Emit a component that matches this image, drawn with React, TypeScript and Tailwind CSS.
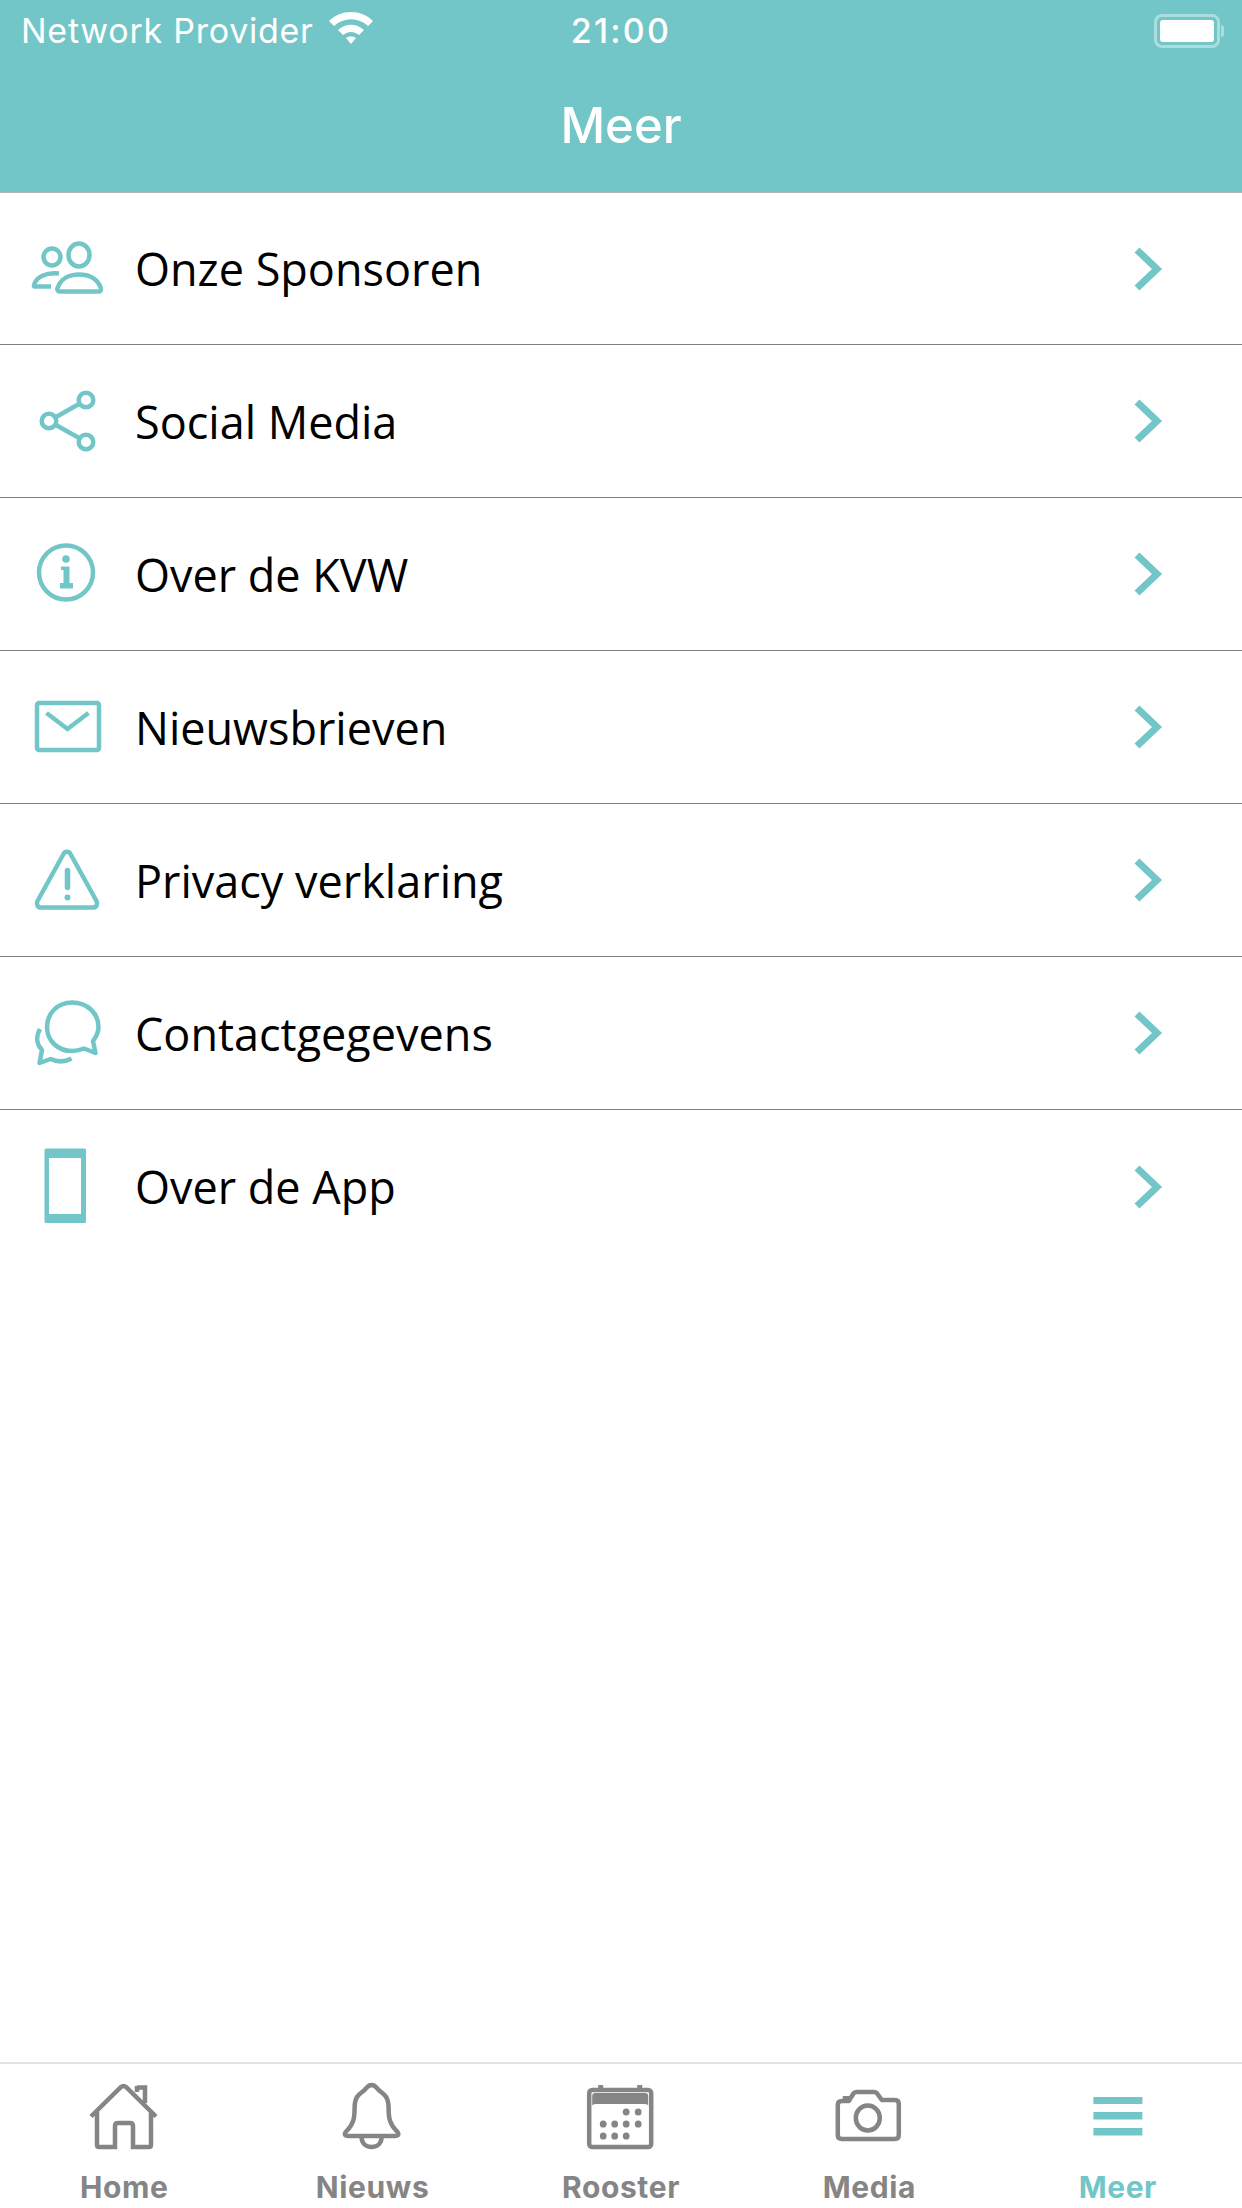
import type { ReactNode } from 'react';

const TEAL = '#72c6c8';
const GRAY = '#858585';

// icon drawings use page coordinates, each svg's viewBox starts at the row top
const rows: { label: string; top: number; icon: ReactNode }[] = [
  {
    label: 'Onze Sponsoren',
    top: 193,
    icon: (
      <g fill="none" stroke={TEAL} strokeWidth="4.500" strokeLinecap="round" strokeLinejoin="round">
        <ellipse cx="79" cy="255" rx="10.500" ry="11.500" />
        <circle cx="52" cy="257" r="8.500" />
        <path d="M59 273.500 C46 272 36 277 34 285 C33.500 286.500 34 286.500 36 286.500 H51" strokeLinecap="butt" />
        <path d="M59 291.500 C57 291 57 288.500 58 287 C61 279 69 274.500 79 274.500 C89 274.500 97 279 100.500 287 C101.500 289.500 101 291.500 98 291.500 Z" />
      </g>
    ),
  },
  {
    label: 'Social Media',
    top: 345,
    icon: (
      <g fill="none" stroke={TEAL} strokeWidth="4.500">
        <circle cx="86" cy="400" r="7.300" />
        <circle cx="49" cy="421" r="7.300" />
        <circle cx="86" cy="442" r="7.300" />
        <path d="M79 404 L56 417 M56 425 L79 438" />
      </g>
    ),
  },
  {
    label: 'Over de KVW',
    top: 498,
    icon: (
      <g>
        <circle cx="66" cy="572.500" r="27" fill="none" stroke={TEAL} strokeWidth="4.500" />
        <circle cx="66" cy="559" r="3.800" fill={TEAL} />
        <path d="M61 566.500 H69.500 V583 H73 V588.500 H60 V583 H63.500 V570 H61 Z" fill={TEAL} />
      </g>
    ),
  },
  {
    label: 'Nieuwsbrieven',
    top: 651,
    icon: (
      <g fill="none" stroke={TEAL} strokeWidth="4.500">
        <rect x="37" y="703" width="62" height="47" rx="2" />
        <path d="M46.500 713 L67.500 729 L88.500 713" />
      </g>
    ),
  },
  {
    label: 'Privacy verklaring',
    top: 804,
    icon: (
      <g>
        <path
          d="M63.500 854 C65 851 69 851 70.500 854 L96.500 901 C98 904 96.500 907.500 93 907.500 H41 C37.500 907.500 36 904 37.500 901 Z"
          fill="none"
          stroke={TEAL}
          strokeWidth="4.500"
          strokeLinejoin="round"
        />
        <path d="M67.500 870.500 V887.500" stroke={TEAL} strokeWidth="5.500" strokeLinecap="round" />
        <circle cx="67.500" cy="897.500" r="3" fill={TEAL} />
      </g>
    ),
  },
  {
    label: 'Contactgegevens',
    top: 957,
    icon: (
      <g fill="none" stroke={TEAL} strokeWidth="4.500" strokeLinejoin="round">
        <path d="M72 1002.500 C58 1002.500 47 1013 47 1027 C47 1041 58 1051 72 1051 C76 1051 80 1050 84 1048.500 L95.500 1053 L93 1041 C96 1037 98.500 1032 98.500 1027 C98.500 1013 87 1002.500 72 1002.500 Z" />
        <path d="M40 1029 C36 1036 36 1044 42 1050 L39.500 1063 L50.500 1059 C57 1062 65 1062 71.500 1058.500" />
      </g>
    ),
  },
  {
    label: 'Over de App',
    top: 1110,
    icon: <path fillRule="evenodd" d="M46 1148.500 H84.500 Q86 1148.500 86 1150 V1221.500 Q86 1223 84.500 1223 H46 Q44.500 1223 44.500 1221.500 V1150 Q44.500 1148.500 46 1148.500 Z M49 1158 V1214 H81 V1158 Z" fill={TEAL} />,
  },
];

const tabs: { label: string; icon: ReactNode }[] = [
  {
    label: 'Home',
    icon: (
      <g fill="none" stroke={GRAY} strokeWidth="4.500">
        <path d="M91 2116.500 L121 2087 Q123.500 2085 126 2087 L156 2116.500" />
        <path d="M97 2112 V2145 Q97 2147 99 2147 H115 V2126 Q115 2123 118 2123 H130 Q133 2123 133 2126 V2147 H149 Q151 2147 151 2145 V2112" />
        <path d="M137 2087.500 H145 V2103 M137 2086 V2092" />
      </g>
    ),
  },
  {
    label: 'Nieuws',
    icon: (
      <g fill="none" stroke={GRAY} strokeWidth="4.500" strokeLinejoin="round">
        <path d="M372 2085 C368 2085 367 2088 365 2090 C360 2094 355 2096 355 2108 C355 2118 354 2124 347 2131 C344 2134 345 2136 349 2136 H395 C399 2136 400 2134 397 2131 C390 2124 389 2118 389 2108 C389 2096 384 2094 379 2090 C377 2088 376 2085 372 2085 Z" />
        <path d="M362 2137 C362 2143 366 2147 372 2147 C378 2147 382 2143 382 2137" />
      </g>
    ),
  },
  {
    label: 'Rooster',
    icon: (
      <g>
        <rect x="589" y="2090" width="62" height="57" rx="3" fill="none" stroke={GRAY} strokeWidth="4.500" />
        <rect x="598" y="2085" width="5" height="4" fill={GRAY} />
        <rect x="637" y="2085" width="5" height="4" fill={GRAY} />
        <path d="M592 2106 V2096 Q592 2093 595 2093 H645 Q648 2093 648 2096 V2106 Q648 2104 644 2104 H596 Q592 2104 592 2106 Z" fill={GRAY} />
        {[
          [626, 2112],
          [638, 2112],
          [603, 2124],
          [614.500, 2124],
          [626, 2124],
          [638, 2124],
          [603, 2136],
          [614.500, 2136],
          [626, 2136],
        ].map(([cx, cy]) => (
          <ellipse key={`${cx}-${cy}`} cx={cx} cy={cy} rx="3.400" ry="3.600" fill={GRAY} />
        ))}
      </g>
    ),
  },
  {
    label: 'Media',
    icon: (
      <g>
        <path
          d="M842 2101 H849 L854 2093 Q855 2092 857 2092 H874 Q876 2092 877 2093 L882 2100 H895 Q899 2100 899 2104 V2135 Q899 2139 895 2139 H842 Q838 2139 838 2135 V2105 Q838 2101 842 2101 Z"
          fill="none"
          stroke={GRAY}
          strokeWidth="4.500"
          strokeLinejoin="round"
        />
        <rect x="843" y="2096" width="8" height="5" fill={GRAY} />
        <ellipse cx="868" cy="2118" rx="12" ry="12.500" fill="none" stroke={GRAY} strokeWidth="4.500" />
      </g>
    ),
  },
  {
    label: 'Meer',
    icon: (
      <g fill={TEAL}>
        <rect x="1093" y="2097" width="49" height="7" />
        <rect x="1093" y="2112" width="49" height="7.500" />
        <rect x="1093" y="2128" width="49" height="7.500" />
      </g>
    ),
  },
];

function ChevronRight() {
  return (
    <svg width="30" height="46" viewBox="0 0 30 46" className="shrink-0">
      <path d="M4 4 L24 23 L4 42" fill="none" stroke={TEAL} strokeWidth="7" />
    </svg>
  );
}

function StatusBar() {
  return (
    <div className="grid h-[62px] grid-cols-3 items-center text-white font-['Inter',sans-serif]">
      <div className="flex items-center pl-[21px]">
        <span className="text-[34px] leading-none tracking-[0.75px] whitespace-nowrap">Network Provider</span>
        <svg width="46" height="34" viewBox="0 0 46 34" className="ml-[14px] -mt-[6px] shrink-0">
          <path d="M1 10 C13 -2 33 -2 45 10 L40 15 C30 6 16 6 6 15 Z" fill="white" />
          <path d="M10 19 C18 12 28 12 36 19 L31 24 C26 20 20 20 15 24 Z" fill="white" />
          <path d="M18 27 C21 25 25 25 28 27 L23 33 Z" fill="white" />
        </svg>
      </div>
      <div className="text-center text-[34px] font-medium leading-none tracking-[2.2px]">21:00</div>
      <div className="flex items-center justify-end pr-[18px]">
        <div className="flex h-[34px] w-[66px] items-center justify-center rounded-[8px] border-[3px] border-white/40">
          <div className="h-[22px] w-[54px] rounded-[3px] bg-white" />
        </div>
        <div className="ml-px h-[12px] w-[3px] rounded-r-full bg-white/40" />
      </div>
    </div>
  );
}

export default function App() {
  return (
    <div className="flex h-[2208px] w-[1242px] flex-col overflow-hidden bg-white">
      <header className="h-[193px] shrink-0 border-b border-[#b5b5b5] bg-[#72c6c8]">
        <StatusBar />
        <h1 className="mt-[34px] text-center font-['Inter',sans-serif] text-[49px] font-medium leading-[60px] text-white">
          Meer
        </h1>
      </header>

      <main className="flex-1">
        {rows.map((row, i) => (
          <div
            key={row.label}
            className={`flex items-center ${i === 0 ? 'h-[152px]' : 'h-[153px]'} ${
              i < rows.length - 1 ? 'border-b border-[#808080]' : ''
            }`}
          >
            <svg width="135" height="152" viewBox={`0 ${row.top} 135 152`} className="shrink-0 self-start">
              {row.icon}
            </svg>
            <span className="flex-1 font-['Open_Sans',sans-serif] text-[45px] leading-none text-black">
              {row.label}
            </span>
            <div className="mr-[79px]">
              <ChevronRight />
            </div>
          </div>
        ))}
      </main>

      <nav className="grid h-[146px] shrink-0 grid-cols-5 border-t-2 border-[#e2e2e2] bg-white">
        {tabs.map((tab, i) => (
          <div key={tab.label} className="flex flex-col items-center">
            <svg width="248.400" height="100" viewBox={`${i * 248.4} 2064 248.4 100`} className="shrink-0">
              {tab.icon}
            </svg>
            <span
              className={`mt-[5px] font-['Inter',sans-serif] text-[30px] font-bold leading-[36px] tracking-[0.6px] ${
                tab.label === 'Meer' ? 'text-[#72c6c8]' : 'text-[#858585]'
              }`}
            >
              {tab.label}
            </span>
          </div>
        ))}
      </nav>
    </div>
  );
}
